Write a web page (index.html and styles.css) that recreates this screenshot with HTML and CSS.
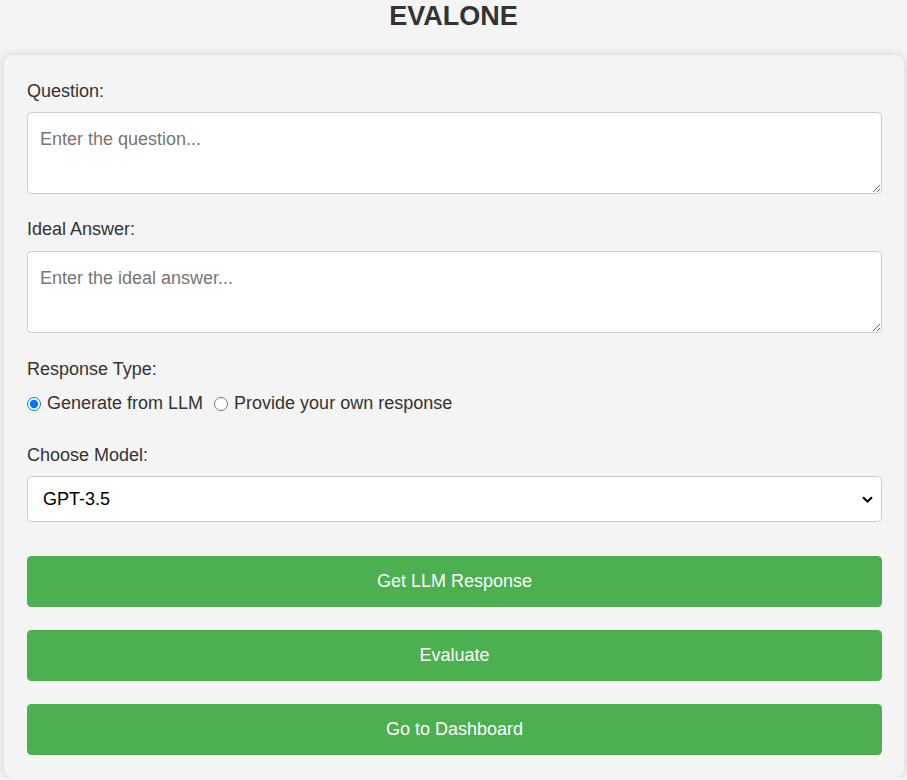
FILE: index.html
```html
<!DOCTYPE html>
<html lang="en">
<head>
<meta charset="utf-8">
<title>EVALONE</title>
<link rel="stylesheet" href="styles.css">
</head>
<body>
  <h1 class="title">EVALONE</h1>
  <div class="container">
    <label class="field-label q-label" for="question">Question:</label>
    <textarea id="question" class="field-text" placeholder="Enter the question..."></textarea>

    <label class="field-label a-label" for="ideal">Ideal Answer:</label>
    <textarea id="ideal" class="field-text" placeholder="Enter the ideal answer..."></textarea>

    <div class="field-label type-label">Response Type:</div>
    <div class="radio-row">
      <label class="radio"><input type="radio" name="rtype" checked> Generate from LLM</label>
      <label class="radio"><input type="radio" name="rtype"> Provide your own response</label>
    </div>

    <label class="field-label model-label" for="model">Choose Model:</label>
    <select id="model" class="field-select">
      <option>GPT-3.5</option>
      <option>GPT-4</option>
    </select>

    <div class="actions">
      <button class="btn" type="button">Get LLM Response</button>
      <button class="btn" type="button">Evaluate</button>
      <button class="btn" type="button">Go to Dashboard</button>
    </div>
  </div>
</body>
</html>
```
FILE: styles.css
```css
html, body {
  margin: 0;
  padding: 0;
  background: #f4f4f4;
}
body {
  font-family: "Liberation Sans", Arial, sans-serif;
  color: #333;
  font-size: 18px;
}
.title {
  margin: 1px 0 0;
  text-align: center;
  font-size: 27px;
  font-weight: bold;
  line-height: 31px;
  color: #333;
}
.container {
  margin: 23px 3px 0 4px;
  background: #f4f4f4;
  border-radius: 8px;
  box-shadow: 0 0 10px rgba(0, 0, 0, 0.15);
  padding: 24px 22px 22px 23px;
  display: flex;
  flex-direction: column;
}
.field-label {
  display: block;
  font-size: 18px;
  line-height: 21px;
  margin-bottom: 12px;
}
.q-label {
  margin-top: 2px;
  margin-bottom: 10px;
}
.a-label {
  margin-top: 1px;
  margin-bottom: 11px;
}
.field-text {
  box-sizing: border-box;
  width: 100%;
  height: 82px;
  padding: 16px 12px 10px;
  border: 1px solid #ccc;
  border-radius: 4.5px;
  background: #fff;
  font-family: "Liberation Sans", Arial, sans-serif;
  font-size: 18px;
  line-height: 21px;
  color: #333;
  margin: 0 0 24px;
  resize: vertical;
}
.field-text::placeholder {
  color: #757575;
}
.type-label {
  margin-top: 2px;
  margin-bottom: 13px;
}
.radio-row {
  display: flex;
  align-items: center;
  margin: 0 0 31px;
  line-height: 21px;
}
.radio {
  display: inline-flex;
  align-items: center;
  gap: 6px;
  margin-right: 11px;
  font-size: 18px;
}
.radio input {
  margin: 0;
  width: 14px;
  height: 14px;
}
.model-label {
  margin-bottom: 10px;
}
.field-select {
  box-sizing: border-box;
  width: 100%;
  height: 46px;
  padding: 0 30px 0 15px;
  border: 1px solid #ccc;
  border-radius: 4.5px;
  background-color: #fff;
  background-image: url("data:image/svg+xml,%3Csvg xmlns='http://www.w3.org/2000/svg' width='11' height='7' viewBox='0 0 11 7'%3E%3Cpath d='M1 1.2 L5.5 5.5 L10 1.2' fill='none' stroke='%23000' stroke-width='2.2'/%3E%3C/svg%3E");
  background-repeat: no-repeat;
  background-position: right 8px center;
  -webkit-appearance: none;
  appearance: none;
  font-family: "Liberation Sans", Arial, sans-serif;
  font-size: 18px;
  color: #000;
  margin: 0;
}
.actions {
  display: flex;
  flex-direction: column;
  gap: 23px;
  margin-top: 34px;
}
.btn {
  height: 51px;
  width: 100%;
  border: none;
  border-radius: 4.5px;
  background: #4caf50;
  color: #fff;
  font-family: "Liberation Sans", Arial, sans-serif;
  font-size: 18px;
  cursor: pointer;
}
```
